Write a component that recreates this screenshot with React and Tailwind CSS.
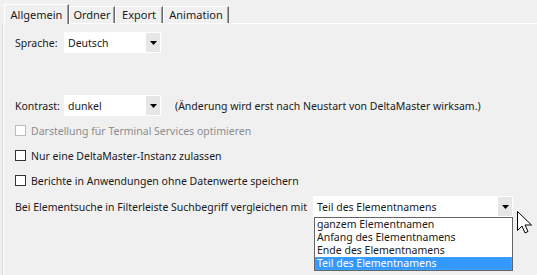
import { useState } from "react";

const font = { fontFamily: '"Noto Sans", "Open Sans", sans-serif' };

function Tab({ label, active, width }) {
  if (active) {
    return (
      <div className={`relative z-10 -mb-px flex h-[20px] items-center justify-center border-t border-l border-white border-r border-r-[#696969] bg-[#f0f0f0] pt-px shadow-[inset_-1px_0_0_#a0a0a0] ${width}`}>
        {label}
      </div>
    );
  }
  return (
    <div className={`flex h-[17px] items-center justify-center border-t border-l border-white border-r border-r-[#696969] shadow-[inset_-1px_0_0_#a0a0a0] ${width}`}>
      {label}
    </div>
  );
}

function Combo({ value, width }) {
  return (
    <div className={`flex h-[21px] items-center bg-white pl-[4px] ${width}`}>
      <span className="flex-1 whitespace-nowrap">{value}</span>
      <div className="my-px mr-px flex h-[19px] w-[14px] items-center justify-center bg-[#e6e6e6]">
        <svg width="7" height="4" viewBox="0 0 7 4">
          <path d="M0 0h7L3.5 4z" fill="#000" />
        </svg>
      </div>
    </div>
  );
}

function Check({ label, disabled }) {
  return (
    <div className={`flex h-[25px] items-center gap-[5px] whitespace-nowrap ${disabled ? "text-[#8d8d8d]" : ""}`}>
      <div className={`h-[11px] w-[11px] bg-white border ${disabled ? "border-[#bcbcbc]" : "border-[#333]"}`} />
      <span>{label}</span>
    </div>
  );
}

const tabs = [
  { label: "Allgemein", width: "w-[65px]" },
  { label: "Ordner", width: "w-[46px]" },
  { label: "Export", width: "w-[48px]" },
  { label: "Animation", width: "w-[66px]" },
];

export default function App() {
  const [tab] = useState("Allgemein");
  const options = ["ganzem Elementnamen", "Anfang des Elementnamens", "Ende des Elementnamens", "Teil des Elementnamens"];

  return (
    <div style={font} className="relative h-[275px] w-[537px] overflow-hidden bg-[#f0f0f0] text-[10.5px] leading-[14px] text-[#1a1a1a]">
      <div className="flex items-end pl-[4px] pt-[4px] h-[23px] text-[11px]">
        {tabs.map((t) => (
          <Tab key={t.label} label={t.label} width={t.width} active={t.label === tab} />
        ))}
      </div>

      <div className="ml-[3px] h-[260px] border-t border-l border-white shadow-[-1px_0_0_#dadada]">
        <div className="pl-[11px] pt-[8px]">
          <div className="flex items-center h-[21px]">
            <span className="w-[49px] whitespace-nowrap">Sprache:</span>
            <Combo value="Deutsch" width="w-[97px]" />
          </div>

          <div className="mt-[42px] flex items-center h-[21px] whitespace-nowrap">
            <span className="w-[49px]">Kontrast:</span>
            <Combo value="dunkel" width="w-[97px]" />
            <span className="ml-[14px]">(Änderung wird erst nach Neustart von DeltaMaster wirksam.)</span>
          </div>

          <div className="mt-[2px]">
            <Check label="Darstellung für Terminal Services optimieren" disabled />
            <Check label="Nur eine DeltaMaster-Instanz zulassen" />
            <Check label="Berichte in Anwendungen ohne Datenwerte speichern" />
          </div>

          <div className="mt-[3px] flex items-center h-[21px]">
            <span className="w-[298px] whitespace-nowrap">Bei Elementsuche in Filterleiste Suchbegriff vergleichen mit</span>
            <div className="relative">
              <Combo value="Teil des Elementnamens" width="w-[200px]" />
              <div className="absolute left-px top-[21px] w-[199px] border border-[#646464] bg-white leading-[13px] whitespace-nowrap">
                {options.map((o, i) => (
                  <div
                    key={o}
                    className={`h-[13px] pl-[2px] ${i === 3 ? "bg-[#3399ff] text-white outline-1 outline-dotted outline-[#e38a2d] -outline-offset-1" : ""}`}
                  >
                    {o}
                  </div>
                ))}
              </div>
              <svg className="absolute left-[204px] top-[15px]" width="16" height="26" viewBox="0 0 16 26">
                <path d="M0.5 0.5v19l4.5-4.5 3 7 3-1.5-3-6.5h6.5z" fill="#fff" stroke="#000" />
              </svg>
            </div>
          </div>
        </div>
      </div>
    </div>
  );
}
